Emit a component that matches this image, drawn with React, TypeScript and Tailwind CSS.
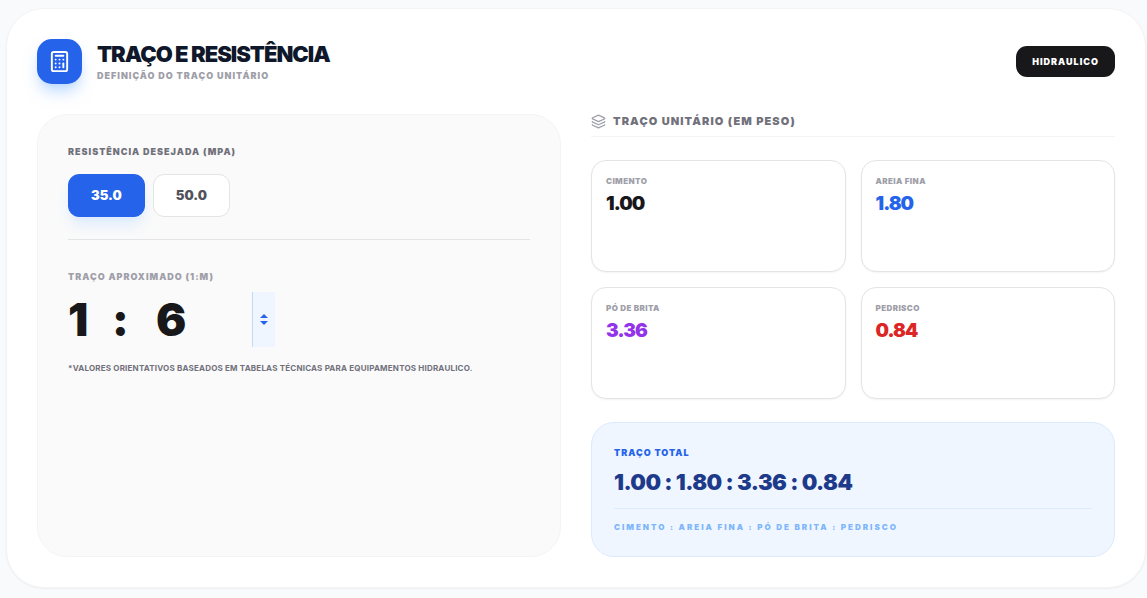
import React from 'react';
import { Calculator, Layers } from 'lucide-react';

const strengths = ["35.0", "50.0"];

const materials = [
  { name: "Cimento", value: "1.00", color: "text-zinc-900" },
  { name: "Areia Fina", value: "1.80", color: "text-[#2563eb]" },
  { name: "Pó de Brita", value: "3.36", color: "text-[#9333ea]" },
  { name: "Pedrisco", value: "0.84", color: "text-[#dc2626]" },
];

const App: React.FC = () => {
  const [selected, setSelected] = React.useState("35.0");
  const [ratio, setRatio] = React.useState(6);

  return (
    <main className="min-h-screen bg-slate-50 pt-2 pr-px pb-2.5 pl-1.5 font-['Inter',sans-serif] text-zinc-900 [font-feature-settings:'calt'_0]">
      <div className="rounded-[38px] border border-zinc-100 bg-white p-[30px] shadow-xs">
        <header className="mb-[30px] flex items-center justify-between">
          <div className="flex items-center gap-[15px]">
            <div className="flex size-[45px] items-center justify-center rounded-[15px] bg-[#2563eb] text-white shadow-lg shadow-blue-200">
              <Calculator className="size-[23px]" />
            </div>
            <div>
              <h1 className="text-[22px] leading-[27px] font-black tracking-[-1px] text-slate-900 uppercase">Traço e Resistência</h1>
              <p className="text-[9px] leading-[15px] font-black tracking-[1px] text-zinc-400 uppercase">Definição do traço unitário</p>
            </div>
          </div>
          <span className="rounded-[11px] bg-zinc-900 px-4 py-2 text-[9px] leading-[15px] font-black tracking-[1px] text-white uppercase">Hidraulico</span>
        </header>

        <div className="grid grid-cols-2 gap-[30px]">
          <section className="rounded-[30px] border border-zinc-100 bg-zinc-50 p-[30px]">
            <h2 className="text-[9px] leading-[14px] font-black tracking-[1px] text-zinc-500 uppercase">Resistência desejada (MPa)</h2>
            <div className="mt-[15px] flex gap-2">
              {strengths.map((strength) => (
                <button
                  key={strength}
                  type="button"
                  onClick={() => setSelected(strength)}
                  className={
                    selected === strength
                      ? "rounded-[11px] border border-[#2563eb] bg-[#2563eb] px-[22px] py-[11px] text-[13px] leading-[19px] font-black text-white shadow-lg shadow-blue-100"
                      : "rounded-[11px] border border-zinc-200 bg-white px-[22px] py-[11px] text-[13px] leading-[19px] font-black text-zinc-600"
                  }
                >
                  {strength}
                </button>
              ))}
            </div>

            <div className="mt-[22px] border-t border-zinc-200 pt-[30px]">
              <label htmlFor="ratio" className="block text-[9px] leading-[14px] font-black tracking-[1px] text-zinc-400 uppercase">Traço aproximado (1:m)</label>
              <div className="mt-2 flex items-center text-[45px] leading-[55px] font-black">
                <span className="w-11">1</span>
                <span className="w-11">:</span>
                <input
                  id="ratio"
                  inputMode="numeric"
                  value={ratio}
                  onChange={(e) => setRatio(Number(e.target.value) || 0)}
                  className="h-[55px] w-24 bg-transparent outline-none"
                />
                <div className="flex h-[55px] w-[23px] flex-col items-center justify-center gap-[3px] border-l border-blue-200 bg-blue-50 text-[#2563eb]">
                  <button type="button" aria-label="Aumentar" onClick={() => setRatio(ratio + 1)}>
                    <svg viewBox="0 0 8 4" className="h-1 w-2 fill-current"><path d="M0 4 4 0l4 4z" /></svg>
                  </button>
                  <button type="button" aria-label="Diminuir" onClick={() => setRatio(ratio - 1)}>
                    <svg viewBox="0 0 8 4" className="h-1 w-2 fill-current"><path d="M0 0h8L4 4z" /></svg>
                  </button>
                </div>
              </div>
              <p className="mt-[15px] text-[8px] leading-3 font-bold tracking-wide text-zinc-500 uppercase">*Valores orientativos baseados em tabelas técnicas para equipamentos Hidraulico.</p>
            </div>
          </section>

          <section>
            <div className="flex items-center gap-[7px] border-b border-zinc-100 pb-[7px]">
              <Layers className="size-[15px] text-zinc-400" />
              <h2 className="text-[11px] leading-[15px] font-black tracking-widest text-zinc-500 uppercase">Traço unitário (em peso)</h2>
            </div>
            <div className="mt-[23px] grid grid-cols-2 gap-[15px]">
              {materials.map((material) => (
                <div key={material.name} className="min-h-28 rounded-[15px] border border-zinc-200 bg-white px-3.5 py-3.5 shadow-xs">
                  <h3 className="text-[8px] leading-3 font-black tracking-wider text-zinc-400 uppercase">{material.name}</h3>
                  <p className={`mt-1 text-[19px] leading-[26px] font-black tracking-tighter ${material.color}`}>{material.value}</p>
                </div>
              ))}
            </div>
            <div className="mt-[23px] rounded-[23px] border border-blue-100 bg-blue-50 p-[22px]">
              <h3 className="text-[9px] leading-[15px] font-black tracking-[1px] text-[#2563eb] uppercase">Traço total</h3>
              <p className="mt-2 text-[22px] leading-7 font-black tracking-tight text-[#1e3a8a]">{materials.map((m) => m.value).join(" : ")}</p>
              <p className="mt-3 border-t border-blue-100 pt-3 text-[8px] leading-[13px] font-black tracking-[2px] text-[#60a5fa]/80 uppercase">{materials.map((m) => m.name).join(" : ")}</p>
            </div>
          </section>
        </div>
      </div>
    </main>
  );
};

export default App;
